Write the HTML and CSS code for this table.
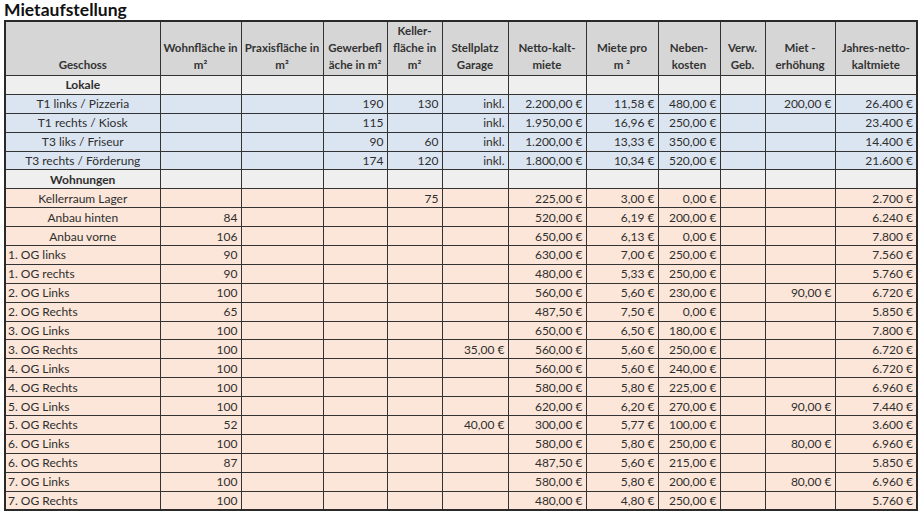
FILE: index.html
```html
<!DOCTYPE html>
<html lang="de">
<head>
<meta charset="utf-8">
<title>Mietaufstellung</title>
<link rel="stylesheet" href="styles.css">
</head>
<body>
<h1 class="title">Mietaufstellung</h1>
<table class="sheet">
<colgroup>
<col class="c1"><col class="c2"><col class="c3"><col class="c4"><col class="c5"><col class="c6"><col class="c7"><col class="c8"><col class="c9"><col class="c10"><col class="c11"><col class="c12">
</colgroup>
<thead>
<tr>
<th>Geschoss</th><th>Wohnfläche in<br>m²</th><th>Praxisfläche in<br>m²</th><th>Gewerbefl<br>äche in m²</th><th>Keller-<br>fläche in<br>m²</th><th>Stellplatz<br>Garage</th><th>Netto-kalt-<br>miete</th><th>Miete pro<br>m ²</th><th>Neben-<br>kosten</th><th>Verw.<br>Geb.</th><th>Miet -<br>erhöhung</th><th>Jahres-netto-<br>kaltmiete</th>
</tr>
</thead>
<tbody>
<tr class="sec"><td class="name b">Lokale</td><td></td><td></td><td></td><td></td><td></td><td></td><td></td><td></td><td></td><td></td><td></td></tr>
<tr class="blue"><td class="name">T1 links / Pizzeria</td><td></td><td></td><td>190</td><td>130</td><td>inkl.</td><td>2.200,00 €</td><td>11,58 €</td><td>480,00 €</td><td></td><td>200,00 €</td><td>26.400 €</td></tr>
<tr class="blue"><td class="name">T1 rechts / Kiosk</td><td></td><td></td><td>115</td><td></td><td>inkl.</td><td>1.950,00 €</td><td>16,96 €</td><td>250,00 €</td><td></td><td></td><td>23.400 €</td></tr>
<tr class="blue"><td class="name">T3 liks / Friseur</td><td></td><td></td><td>90</td><td>60</td><td>inkl.</td><td>1.200,00 €</td><td>13,33 €</td><td>350,00 €</td><td></td><td></td><td>14.400 €</td></tr>
<tr class="blue"><td class="name">T3 rechts / Förderung</td><td></td><td></td><td>174</td><td>120</td><td>inkl.</td><td>1.800,00 €</td><td>10,34 €</td><td>520,00 €</td><td></td><td></td><td>21.600 €</td></tr>
<tr class="sec"><td class="name b">Wohnungen</td><td></td><td></td><td></td><td></td><td></td><td></td><td></td><td></td><td></td><td></td><td></td></tr>
<tr class="org"><td class="name">Kellerraum Lager</td><td></td><td></td><td></td><td>75</td><td></td><td>225,00 €</td><td>3,00 €</td><td>0,00 €</td><td></td><td></td><td>2.700 €</td></tr>
<tr class="org"><td class="name">Anbau hinten</td><td>84</td><td></td><td></td><td></td><td></td><td>520,00 €</td><td>6,19 €</td><td>200,00 €</td><td></td><td></td><td>6.240 €</td></tr>
<tr class="org"><td class="name">Anbau vorne</td><td>106</td><td></td><td></td><td></td><td></td><td>650,00 €</td><td>6,13 €</td><td>0,00 €</td><td></td><td></td><td>7.800 €</td></tr>
<tr class="org"><td class="left">1. OG links</td><td>90</td><td></td><td></td><td></td><td></td><td>630,00 €</td><td>7,00 €</td><td>250,00 €</td><td></td><td></td><td>7.560 €</td></tr>
<tr class="org"><td class="left">1. OG rechts</td><td>90</td><td></td><td></td><td></td><td></td><td>480,00 €</td><td>5,33 €</td><td>250,00 €</td><td></td><td></td><td>5.760 €</td></tr>
<tr class="org"><td class="left">2. OG Links</td><td>100</td><td></td><td></td><td></td><td></td><td>560,00 €</td><td>5,60 €</td><td>230,00 €</td><td></td><td>90,00 €</td><td>6.720 €</td></tr>
<tr class="org"><td class="left">2. OG Rechts</td><td>65</td><td></td><td></td><td></td><td></td><td>487,50 €</td><td>7,50 €</td><td>0,00 €</td><td></td><td></td><td>5.850 €</td></tr>
<tr class="org"><td class="left">3. OG Links</td><td>100</td><td></td><td></td><td></td><td></td><td>650,00 €</td><td>6,50 €</td><td>180,00 €</td><td></td><td></td><td>7.800 €</td></tr>
<tr class="org"><td class="left">3. OG Rechts</td><td>100</td><td></td><td></td><td></td><td>35,00 €</td><td>560,00 €</td><td>5,60 €</td><td>250,00 €</td><td></td><td></td><td>6.720 €</td></tr>
<tr class="org"><td class="left">4. OG Links</td><td>100</td><td></td><td></td><td></td><td></td><td>560,00 €</td><td>5,60 €</td><td>240,00 €</td><td></td><td></td><td>6.720 €</td></tr>
<tr class="org"><td class="left">4. OG Rechts</td><td>100</td><td></td><td></td><td></td><td></td><td>580,00 €</td><td>5,80 €</td><td>225,00 €</td><td></td><td></td><td>6.960 €</td></tr>
<tr class="org"><td class="left">5. OG Links</td><td>100</td><td></td><td></td><td></td><td></td><td>620,00 €</td><td>6,20 €</td><td>270,00 €</td><td></td><td>90,00 €</td><td>7.440 €</td></tr>
<tr class="org"><td class="left">5. OG Rechts</td><td>52</td><td></td><td></td><td></td><td>40,00 €</td><td>300,00 €</td><td>5,77 €</td><td>100,00 €</td><td></td><td></td><td>3.600 €</td></tr>
<tr class="org"><td class="left">6. OG Links</td><td>100</td><td></td><td></td><td></td><td></td><td>580,00 €</td><td>5,80 €</td><td>250,00 €</td><td></td><td>80,00 €</td><td>6.960 €</td></tr>
<tr class="org"><td class="left">6. OG Rechts</td><td>87</td><td></td><td></td><td></td><td></td><td>487,50 €</td><td>5,60 €</td><td>215,00 €</td><td></td><td></td><td>5.850 €</td></tr>
<tr class="org"><td class="left">7. OG Links</td><td>100</td><td></td><td></td><td></td><td></td><td>580,00 €</td><td>5,80 €</td><td>200,00 €</td><td></td><td>80,00 €</td><td>6.960 €</td></tr>
<tr class="org"><td class="left">7. OG Rechts</td><td>100</td><td></td><td></td><td></td><td></td><td>480,00 €</td><td>4,80 €</td><td>250,00 €</td><td></td><td></td><td>5.760 €</td></tr>
</tbody>
</table>
</body>
</html>
```
FILE: styles.css
```css
html, body {
  margin: 0;
  padding: 0;
  background: #ffffff;
}
body {
  font-family: "Lato", "Open Sans", sans-serif;
  color: #2e2e2e;
}
.title {
  margin: 0;
  padding: 1px 0 0 4px;
  height: 19px;
  font-size: 17.5px;
  font-weight: bold;
  line-height: 18px;
  color: #111;
}
.sheet {
  margin-left: 4px;
  width: 912px;
  table-layout: fixed;
  border-collapse: collapse;
  border: 2px solid #2a2a2a;
  font-size: 12px;
}
.c1 { width: 155px; }
.c2 { width: 81px; }
.c3 { width: 82px; }
.c4 { width: 64px; }
.c5 { width: 55px; }
.c6 { width: 66px; }
.c7 { width: 78px; }
.c8 { width: 72px; }
.c9 { width: 62px; }
.c10 { width: 45px; }
.c11 { width: 70px; }
.c12 { width: 82px; }
th, td {
  border: 1px solid #333;
  padding: 0 3px;
  white-space: nowrap;
  overflow: hidden;
}
th {
  background: #d6d6d6;
  height: 48px;
  vertical-align: bottom;
  text-align: center;
  font-weight: bold;
  font-size: 11.5px;
  line-height: 17px;
  padding: 0 1px 2px;
  color: #333;
}
td {
  height: 17.9px;
  line-height: 17px;
  text-align: right;
}
td.name { text-align: center; }
td.left { text-align: left; padding-left: 2px; }
td.b { font-weight: bold; }
.sec td { background: #efefef; }
.blue td { background: #dbe5f1; }
.org td { background: #fce6d9; }
```
